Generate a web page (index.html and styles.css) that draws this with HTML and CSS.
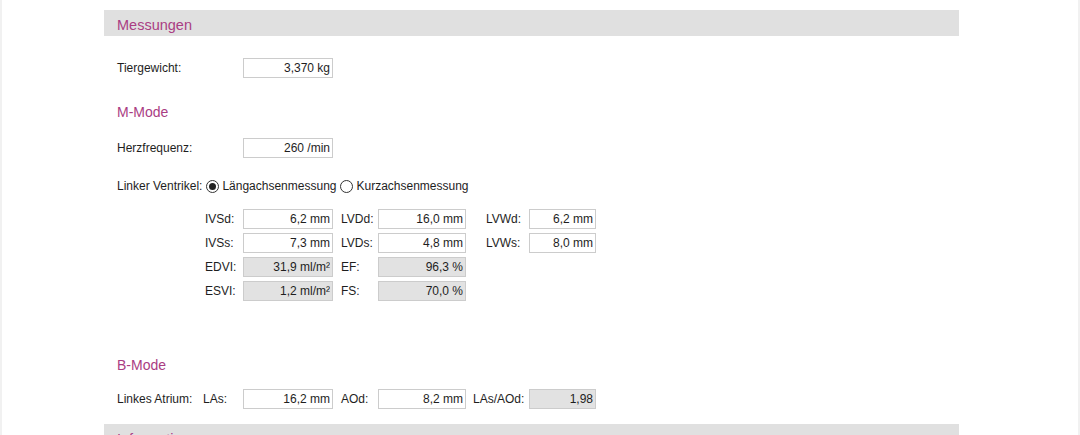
FILE: index.html
```html
<!DOCTYPE html>
<html lang="de">
<head>
    <meta charset="UTF-8">
    <title>Messungen</title>
    <link rel="stylesheet" href="styles.css">
</head>
<body>
    <div class="frame">
        <section class="panel">
            <div class="panel-head">Messungen</div>
            <div class="panel-body">
                <div class="field-row row-weight">
                    <span class="label">Tiergewicht:</span>
                    <input class="box" type="text" value="3,370 kg">
                </div>

                <h3 class="subhead sub-mmode">M-Mode</h3>
                <div class="field-row row-hf">
                    <span class="label">Herzfrequenz:</span>
                    <input class="box" type="text" value="260 /min">
                </div>

                <div class="radio-row">
                    <span class="radio-label">Linker Ventrikel:</span>
                    <label class="radio checked"><span class="dot"></span>Längachsenmessung</label>
                    <label class="radio"><span class="dot"></span>Kurzachsenmessung</label>
                </div>

                <div class="lv-grid">
                    <span class="cell">IVSd:</span><input class="box" type="text" value="6,2 mm">
                    <span class="cell c3">LVDd:</span><input class="box b2" type="text" value="16,0 mm">
                    <span class="cell c5">LVWd:</span><input class="box b3" type="text" value="6,2 mm">

                    <span class="cell">IVSs:</span><input class="box" type="text" value="7,3 mm">
                    <span class="cell c3">LVDs:</span><input class="box b2" type="text" value="4,8 mm">
                    <span class="cell c5">LVWs:</span><input class="box b3" type="text" value="8,0 mm">

                    <span class="cell">EDVI:</span><input class="box calc" type="text" value="31,9 ml/m²" readonly>
                    <span class="cell c3">EF:</span><input class="box b2 calc" type="text" value="96,3 %" readonly>
                    <span></span><span></span>

                    <span class="cell">ESVI:</span><input class="box calc" type="text" value="1,2 ml/m²" readonly>
                    <span class="cell c3">FS:</span><input class="box b2 calc" type="text" value="70,0 %" readonly>
                    <span></span><span></span>
                </div>

                <h3 class="subhead sub-bmode">B-Mode</h3>
                <div class="la-grid">
                    <span class="cell">Linkes Atrium:</span>
                    <span class="cell">LAs:</span><input class="box" type="text" value="16,2 mm">
                    <span class="cell c3">AOd:</span><input class="box b2" type="text" value="8,2 mm">
                    <span class="cell c5b">LAs/AOd:</span><input class="box b3 calc" type="text" value="1,98" readonly>
                </div>
            </div>
        </section>
        <section class="panel">
            <div class="panel-head">Informationen</div>
        </section>
    </div>
</body>
</html>
```

FILE: styles.css
```css
:root {
    --accent: #aa3d83;
    --head-bg: #e0e0e0;
    --text: #1e1e1e;
    --box-border: #cccccc;
    --calc-bg: #e2e2e2;
    --font-main: 'Liberation Sans', Arial, sans-serif;
}
body { margin: 0; background: #ffffff; font-family: var(--font-main); font-size: 12px; color: var(--text); overflow: hidden; }
.frame { height: 435px; border-left: 2px solid #f1f1f1; border-right: 2px solid #f1f1f1; padding-top: 10px; box-sizing: border-box; }
.panel { width: 855px; margin-left: 102px; }
.panel-head { height: 26px; line-height: 31px; background: var(--head-bg); color: var(--accent); font-size: 14.5px; padding-left: 13px; }
.panel-body { padding: 22px 0 15px 13px; }

.field-row { display: flex; align-items: center; height: 20px; }
.field-row .label { width: 126px; }
.subhead { margin: 0; font-weight: normal; font-size: 14px; color: var(--accent); line-height: 20px; height: 20px; }
.sub-mmode { margin-top: 24px; margin-bottom: 16px; }
.sub-bmode { margin-top: 54px; margin-bottom: 14px; }

.box { box-sizing: border-box; width: 90px; height: 20px; margin: 0; padding: 0 2px 0 2px; border: 1px solid var(--box-border); background: #ffffff; font-family: var(--font-main); font-size: 12px; color: var(--text); text-align: right; outline: none; }
.box.b2 { width: 88px; }
.box.b3 { width: 67px; }
.box.calc { background: var(--calc-bg); }

.radio-row { display: flex; align-items: center; height: 20px; margin-top: 18px; }
.radio-label { margin-right: 4px; }
.radio { display: flex; align-items: center; margin-right: 4px; }
.radio .dot { width: 11px; height: 11px; border: 1px solid #333333; border-radius: 50%; margin-right: 3px; display: flex; align-items: center; justify-content: center; background: #ffffff; }
.radio.checked .dot::after { content: ""; width: 7px; height: 7px; border-radius: 50%; background: #222222; }

.lv-grid { display: grid; grid-template-columns: 38px 90px 45px 88px 63px 67px; row-gap: 4px; margin: 13px 0 0 88px; align-items: center; }
.la-grid { display: grid; grid-template-columns: 86px 40px 90px 45px 88px 63px 67px; align-items: center; }
.cell { white-space: nowrap; }
.c3 { padding-left: 8px; }
.c5 { padding-left: 20px; }
.c5b { padding-left: 7px; }
```
